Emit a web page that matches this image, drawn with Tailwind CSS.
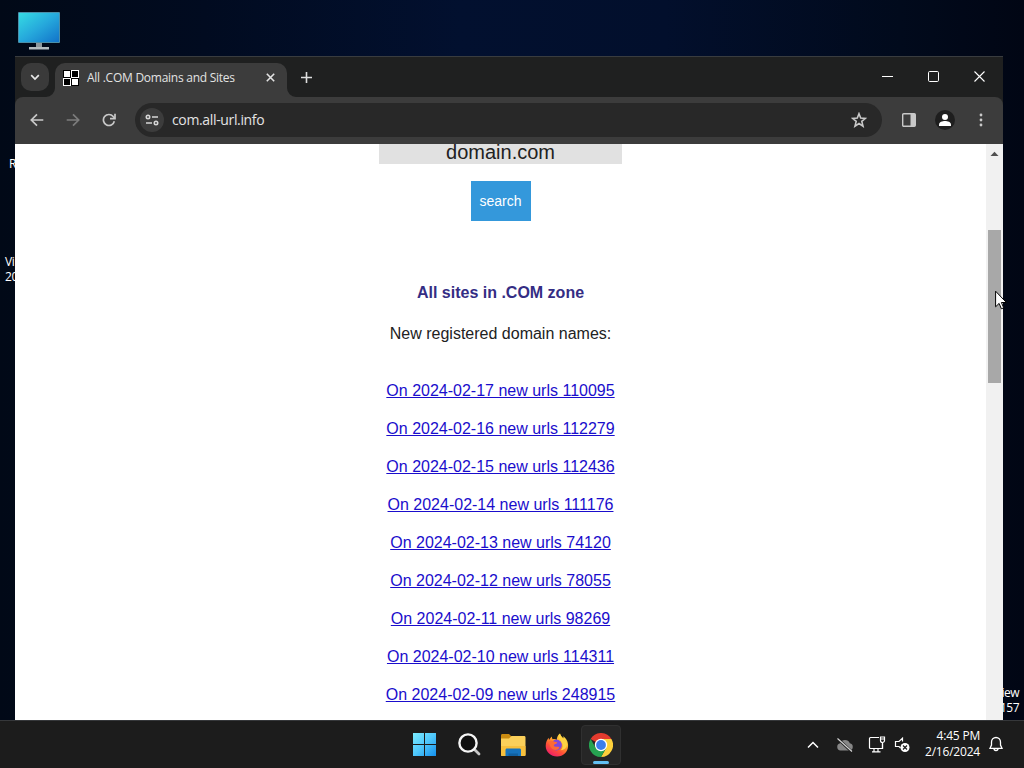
<!DOCTYPE html>
<html lang="en">
  <head>
    <meta charset="UTF-8" />
    <meta name="viewport" content="width=device-width, initial-scale=1.0" />
    <script src="https://cdn.jsdelivr.net/npm/@tailwindcss/browser@4"></script>
    <title>All .COM Domains and Sites</title>
  </head>
  <body
    class="relative w-[1024px] h-[768px] overflow-hidden bg-[linear-gradient(90deg,#010917_0%,#010b20_20%,#02102f_45%,#020f2c_65%,#010a1c_88%,#010614_100%)] font-['Open_Sans','Noto_Sans',sans-serif]"
  >
    <!-- Desktop icons -->
    <svg class="absolute left-[17px] top-[11px]" width="44" height="40" viewBox="0 0 44 40">
      <defs>
        <linearGradient id="screen" x1="0" y1="0" x2="1" y2="1">
          <stop offset="0" stop-color="#35dbe3" />
          <stop offset="0.5" stop-color="#26a9dc" />
          <stop offset="1" stop-color="#1273c9" />
        </linearGradient>
      </defs>
      <path d="M19 31h6v5h-6z" fill="#8d979c" />
      <path d="M12 36h20v2.500h-20z" fill="#b4bcc0" />
      <rect x="1" y="1" width="42" height="31" rx="1" fill="#4b8fa9" />
      <rect x="2" y="2" width="40" height="29" fill="url(#screen)" />
    </svg>
    <div class="absolute left-[9px] top-[156px] text-[12px] leading-[15px] text-white">R</div>
    <div class="absolute left-[5px] top-[254px] text-[12px] leading-[15px] tracking-[-0.4px] text-white">Vi<br />20</div>
    <div class="absolute right-[5px] top-[685px] text-[12px] leading-[15px] tracking-[-0.5px] text-right text-white">iew<br />157</div>

    <!-- Browser window -->
    <div class="absolute left-[15px] top-[56px] w-[988px] h-[664px] flex flex-col bg-white overflow-hidden">
      <!-- Tab strip -->
      <div class="h-[41px] shrink-0 flex bg-[#1f2020] border-t border-[#393c3f] text-[#e3e3e3]">
        <div class="mt-[6px] ml-[6px] w-7 h-7 rounded-[10px] bg-[#3a3a3a] flex items-center justify-center">
          <svg width="10" height="10" viewBox="0 0 10 10" fill="none" stroke="#e8e8e8" stroke-width="1.700"><path d="M1.200 3.200 5 7l3.800-3.800" /></svg>
        </div>
        <div class="relative mt-[6px] ml-[6px] w-[232px] h-[34px] rounded-t-[10px] bg-[#3c3c3c] flex items-center pb-[5px]">
          <svg class="absolute -left-[9px] bottom-0" width="9" height="9" fill="#3c3c3c"><path d="M9 0v9H0a9 9 0 0 0 9-9z" /></svg>
          <svg class="absolute -right-[9px] bottom-0" width="9" height="9" fill="#3c3c3c"><path d="M0 0v9h9a9 9 0 0 1-9-9z" /></svg>
          <svg class="ml-2" width="16" height="16" viewBox="0 0 16 16" shape-rendering="crispEdges">
            <path d="M0 0h16v16H0z" fill="#000" />
            <path d="M1 1h6v6H1zM9 9h6v6H9zM8 0h8v8H8zM0 8h8v8H0z" fill="#fff" />
            <path d="M9 1h6v6H9zM1 9h6v6H1z" fill="#000" />
          </svg>
          <span class="ml-2 w-[172px] whitespace-nowrap text-[12px] leading-4 tracking-[-0.26px]">All .COM Domains and Sites</span>
          <svg class="ml-[7px]" width="9" height="9" viewBox="0 0 9 9" stroke="#e3e3e3" stroke-width="1.600"><path d="m.8.8 7.400 7.400M8.200.8.800 8.200" /></svg>
        </div>
        <svg class="mt-[15px] ml-[14px]" width="11" height="11" viewBox="0 0 11 11" stroke="#dedede" stroke-width="1.600"><path d="M5.500 0v11M0 5.500h11" /></svg>
        <div class="flex-1"></div>
        <div class="flex h-[38px] items-center gap-[35px] mr-[18px]">
          <svg width="11" height="11" viewBox="0 0 11 11"><path d="M0 5h11v1H0z" fill="#fff" /></svg>
          <svg width="11" height="11" viewBox="0 0 11 11" fill="none" stroke="#fff"><rect x=".5" y=".5" width="10" height="10" rx="1.200" /></svg>
          <svg width="11" height="11" viewBox="0 0 11 11" stroke="#fff" stroke-width="1.100"><path d="m.5.5 10 10M10.500.5l-10 10" /></svg>
        </div>
      </div>

      <!-- Toolbar -->
      <div class="h-[47px] shrink-0 bg-[#1f2020]">
        <div class="h-full rounded-t-[8px] bg-[#3c3c3c] flex items-center pb-px">
          <svg class="ml-[15px]" width="14" height="14" viewBox="0 0 14 14" fill="none" stroke="#c9c9c9" stroke-width="1.700"><path d="M13.300 7H1.800M7 1.300 1.300 7 7 12.700" /></svg>
          <svg class="ml-[22px]" width="14" height="14" viewBox="0 0 14 14" fill="none" stroke="#7c7c7c" stroke-width="1.700"><path d="M.7 7h11.500M7 1.300 12.700 7 7 12.700" /></svg>
          <svg class="ml-[22px]" width="14" height="14" viewBox="0 0 14 14" fill="none" stroke="#c9c9c9" stroke-width="1.700"><path d="M12.300 8.200A5.500 5.500 0 1 1 11.200 3.500L12.500 5" /><path d="M13 .7v5H8" /></svg>
          <div class="ml-[19px] w-[747px] h-[34px] rounded-full bg-[#282828] flex items-center">
            <div class="ml-[5px] w-6 h-6 rounded-full bg-[#3c3c3c] flex items-center justify-center">
              <svg width="14" height="12" viewBox="0 0 14 12" fill="none" stroke="#d6d6d6" stroke-width="1.600"><circle cx="3" cy="3" r="1.700" /><path d="M7 3h6M1 9h6" /><circle cx="11" cy="9" r="1.700" /></svg>
            </div>
            <span class="ml-2 flex-1 text-[14px] leading-5 tracking-[-0.35px] text-[#e3e3e3]">com.all-url.info</span>
            <svg class="mr-[15px]" width="16" height="16" viewBox="0 0 16 16" fill="none" stroke="#c9c9c9" stroke-width="1.600"><path d="m8 1.700 1.700 4.400 4.700.3-3.600 3 1.200 4.700L8 11.500 4 14.100l1.200-4.700-3.600-3 4.700-.3z" /></svg>
          </div>
          <svg class="ml-5" width="14" height="14" viewBox="0 0 14 14"><rect x=".7" y=".7" width="12.600" height="12.600" rx="1" fill="none" stroke="#c9c9c9" stroke-width="1.400" /><path d="M8.500 1H13v12H8.500z" fill="#c9c9c9" /></svg>
          <div class="ml-[19px] w-5 h-5 rounded-full bg-[#1e1e1e] flex items-center justify-center">
            <svg width="14" height="14" viewBox="0 0 14 14" fill="#fff"><circle cx="7" cy="4" r="3" /><path d="M1 13v-1.500C1 9 4.500 8 7 8s6 1 6 3.500V13z" /></svg>
          </div>
          <svg class="ml-6" width="4" height="14" viewBox="0 0 4 14" fill="#c9c9c9"><circle cx="2" cy="2" r="1.400" /><circle cx="2" cy="7" r="1.400" /><circle cx="2" cy="12" r="1.400" /></svg>
        </div>
      </div>

      <!-- Page -->
      <div class="flex-1 flex min-h-0">
        <div class="w-[971px] flex flex-col items-center overflow-hidden font-['Liberation_Sans',Arial,sans-serif] text-[16px] text-[#222]">
          <div class="w-[243px] h-5 shrink-0 bg-[#e1e1e1] text-center text-[20px] leading-[17px]">domain.com</div>
          <button class="mt-[17px] w-[60px] h-10 shrink-0 bg-[#3498db] text-[14px] text-white">search</button>
          <h1 class="mt-[62px] leading-5 font-bold text-[#342d84]">All sites in .COM zone</h1>
          <p class="mt-[21px] leading-5">New registered domain names:</p>
          <ul class="mt-[28px] text-center leading-[38px] text-[#1a0dcc] underline">
            <li><a href="#">On 2024-02-17 new urls 110095</a></li>
            <li><a href="#">On 2024-02-16 new urls 112279</a></li>
            <li><a href="#">On 2024-02-15 new urls 112436</a></li>
            <li><a href="#">On 2024-02-14 new urls 111176</a></li>
            <li><a href="#">On 2024-02-13 new urls 74120</a></li>
            <li><a href="#">On 2024-02-12 new urls 78055</a></li>
            <li><a href="#">On 2024-02-11 new urls 98269</a></li>
            <li><a href="#">On 2024-02-10 new urls 114311</a></li>
            <li><a href="#">On 2024-02-09 new urls 248915</a></li>
          </ul>
        </div>
        <!-- Scrollbar -->
        <div class="w-[17px] bg-[#f1f1f1] pl-[2px]">
          <svg class="mt-[7px] ml-[2px]" width="9" height="5" fill="#505050"><path d="M.5 5 4.500.8 8.500 5z" /></svg>
          <div class="mt-[74px] w-[13px] h-[153px] bg-[#a8a8a8]"></div>
        </div>
      </div>
    </div>

    <!-- Taskbar -->
    <div class="absolute left-0 bottom-0 w-full h-12 bg-[#1c1c1c] border-t border-[#35373a] flex items-center text-white">
      <svg class="ml-[413px]" width="23" height="23" viewBox="0 0 23 23">
        <defs>
          <linearGradient id="win" gradientUnits="userSpaceOnUse" x1="0" y1="0" x2="23" y2="23">
            <stop offset="0" stop-color="#7cecff" />
            <stop offset="0.5" stop-color="#4fc7fb" />
            <stop offset="1" stop-color="#1490ee" />
          </linearGradient>
        </defs>
        <path d="M0 0h11v11H0zM12 0h11v11H12zM0 12h11v11H0zM12 12h11v11H12z" fill="url(#win)" />
      </svg>
      <svg class="ml-[22px]" width="23" height="23" viewBox="0 0 23 23"><path d="m16 16 5 5" stroke="#c6c6c6" stroke-width="2.800" stroke-linecap="round" /><circle cx="10" cy="10" r="8.600" fill="#101010" stroke="#f5f5f5" stroke-width="2.400" /></svg>
      <svg class="ml-[19px]" width="26" height="24" viewBox="0 0 26 24">
        <path d="M1 2.500C1 1.500 1.500 1 2.500 1H9l2.500 2.500V8H1z" fill="#c98a10" />
        <path d="M1 5.500h8L11.500 3H24c1 0 1.500.5 1.500 1.500v17c0 1-.5 1.500-1.500 1.500H2.500C1.500 23 1 22.500 1 21.500z" fill="#fbd05a" />
        <path d="M1 13h24.500v8.500c0 1-.5 1.500-1.500 1.500H2.500C1.500 23 1 22.500 1 21.500z" fill="#f8c03c" />
        <path d="M5.500 23v-6c0-1 .6-1.500 1.500-1.500h12.500c.9 0 1.500.5 1.500 1.500v6z" fill="#1673bd" />
        <path d="M8.500 23v-2.500H18V23z" fill="#11609f" />
      </svg>
      <svg class="ml-[19px]" width="24" height="24" viewBox="0 0 24 24">
        <defs>
          <linearGradient id="fox" x1="0.8" y1="0" x2="0.2" y2="1">
            <stop offset="0" stop-color="#fff04a" />
            <stop offset="0.35" stop-color="#ffac2b" />
            <stop offset="0.65" stop-color="#ff5136" />
            <stop offset="1" stop-color="#ed1671" />
          </linearGradient>
        </defs>
        <path d="M15 .5c.2 2 2 3.400 3.400 5 .2-.8 0-1.700-.3-2.300 3 2 5.200 5.500 5 9.800-.3 6-4.800 10.500-11 10.500S.8 19 .7 13c0-4 1.500-6.500 3-8.300L4 7c1-1.700 1.800-2.500 3-3.500-.1 1.200.1 2 .8 2.700 1.600-.3 2.800 0 4 .8-.1-2.500 1-5 3.200-6.500z" fill="url(#fox)" />
        <circle cx="11.500" cy="12" r="5.400" fill="#8048db" />
        <path d="M4 8c2-.7 4-.4 5.500.8l2.800.5c-.2 1.300-1.400 1.900-2.900 2.100-.8.500-.8 1.500.2 2 2.100 1 3.200-.1 4.900 1-1 2.600-4.500 3.300-7 1.600C5 14.500 4 10.800 4 8z" fill="#ff6a35" />
        <path d="M14 3.500c-.5 3.500 4 5.500 3.700 9.500-.2 2-1 3.200-2.200 4.200 4.500-.2 6.800-3.200 6.500-7-.3-2.500-1.700-3.700-3.600-4.700C17 4.500 15.800 3 15 .5c-.6.800-1 2-1 3z" fill="#ffd343" />
      </svg>
      <div class="relative ml-3 w-10 h-10 rounded bg-[#262626] border border-[#303030] flex items-center justify-center">
        <svg width="24" height="24" viewBox="0 0 24 24">
          <path d="M12 12 1.600 6A12 12 0 0 1 22.400 6z" fill="#e33b2e" />
          <path d="M12 12h0L22.400 6A12 12 0 0 1 12 24l5.200-9z" fill="#fdd03b" />
          <path d="M12 12 17.200 15 12 24A12 12 0 0 1 1.600 6L6.800 15z" fill="#26a351" />
          <path d="M12 6h10.400L17.200 15z" fill="#fdd03b" />
          <circle cx="12" cy="12" r="6.200" fill="#fff" />
          <circle cx="12" cy="12" r="4.900" fill="#3b7ded" />
        </svg>
        <div class="absolute left-[11px] bottom-0 w-4 h-[3px] rounded-full bg-[#62bff2]"></div>
      </div>
      <div class="flex-1"></div>
      <!-- System tray -->
      <svg width="12" height="8" viewBox="0 0 12 8" fill="none" stroke="#fff" stroke-width="1.500"><path d="M1 6.500 6 1.500l5 5" /></svg>
      <svg class="ml-[17px]" width="18" height="16" viewBox="0 0 18 16"><path d="M4.500 13.500a3.700 3.700 0 0 1-.3-7.300 5.200 5.200 0 0 1 9.600 0 3.700 3.700 0 0 1-.3 7.300z" fill="#868686" /><path d="m1.500 1.500 14 13" stroke="#1c1c1c" stroke-width="2.600" /><path d="m1.500 1.500 14.500 13" stroke="#d4d4d4" stroke-width="1.200" /></svg>
      <svg class="ml-[14px]" width="18" height="17" viewBox="0 0 18 17" fill="none" stroke="#fff" stroke-width="1.200"><path d="M11 1.500H2.500c-.6 0-1 .4-1 1v9c0 .6.4 1 1 1h12V7.500M6 12.500v3M10 12.500v3M4 15.800h8.500" /><path d="M12.500 1h4v3.500a2 2 0 0 1-4 0zM12.500 3h4M14.500 6.500V13" /></svg>
      <svg class="ml-[8px]" width="17" height="16" viewBox="0 0 17 16"><path d="M8.500 4.500V1.200L5 4.500H1.500v5H5l1.500 1.500" fill="none" stroke="#fff" stroke-width="1.200" /><circle cx="11" cy="10.500" r="4.500" fill="#fff" /><path d="m9 8.500 4 4M13 8.500l-4 4" stroke="#1c1c1c" stroke-width="1.200" /></svg>
      <div class="ml-[8px] mb-px w-[61px] text-right text-[12px] leading-4 tracking-[-0.2px] whitespace-nowrap">4:45 PM<br />2/16/2024</div>
      <svg class="ml-[9px] mr-[21px] mb-px" width="14" height="16" viewBox="0 0 14 16" fill="none" stroke="#fff" stroke-width="1.300"><path d="M2.500 9V6a4.500 4.500 0 0 1 9 0v3l1.500 3.300H1zM5 12.500a2 2 0 0 0 4 0" /></svg>
    </div>

    <!-- Mouse pointer -->
    <svg class="absolute left-[995px] top-[290px]" width="13" height="20" viewBox="0 0 13 20"><path d="M.6 1.200v15.600l3.500-3.400 2.300 5.400 2.300-1-2.300-5.300h5z" fill="#fff" stroke="#000" /></svg>
  </body>
</html>
